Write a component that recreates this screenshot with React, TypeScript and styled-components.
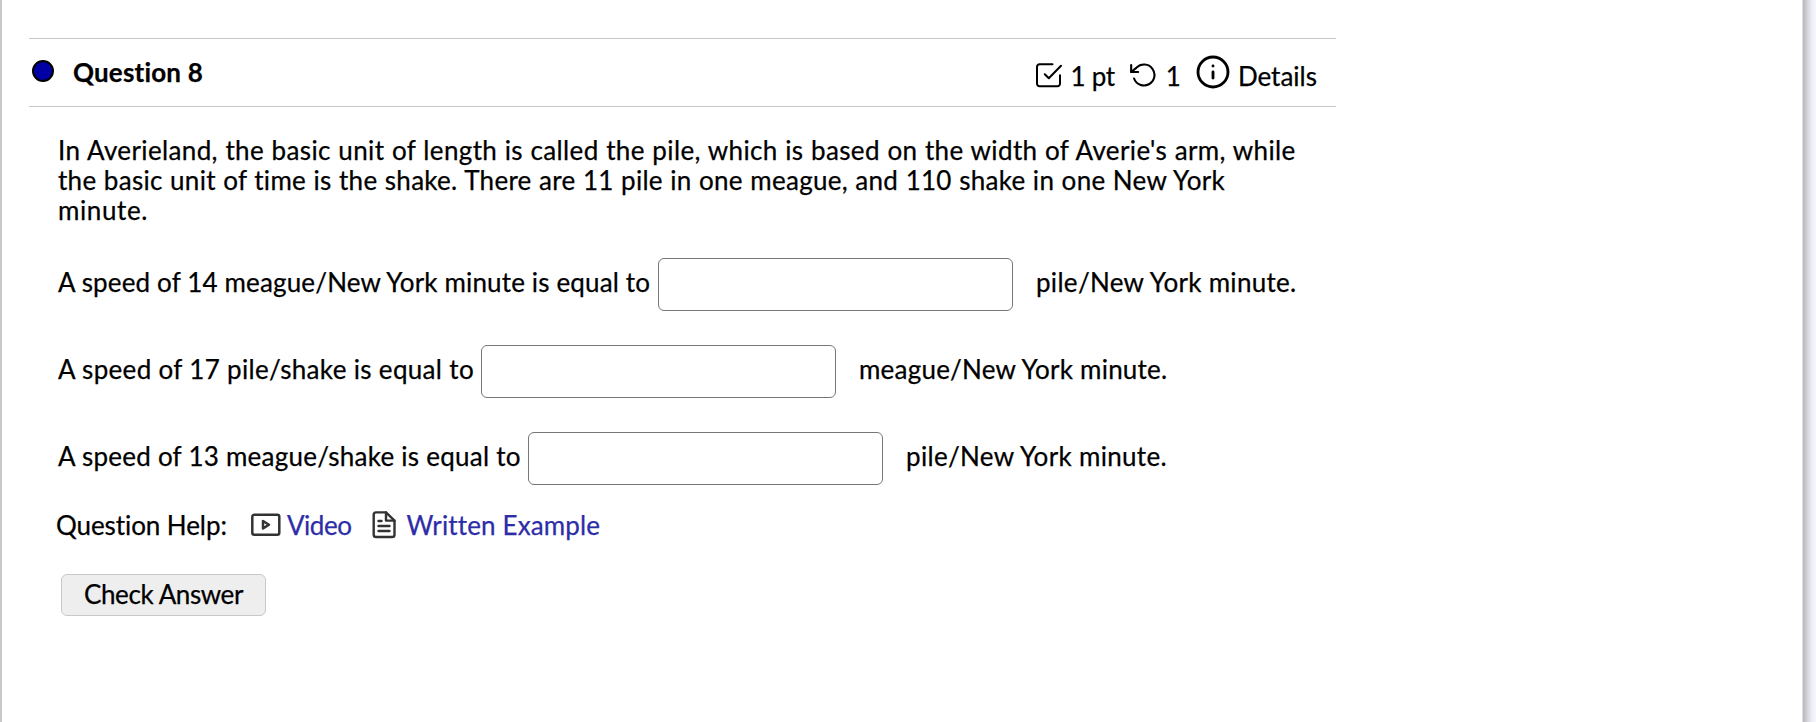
import React from 'react';
import styled, { createGlobalStyle } from 'styled-components';

const GlobalStyle = createGlobalStyle`
  * { box-sizing: border-box; }
  body {
    margin: 0;
    background: #f6f6ff;
    color: #000;
    font: 400 26px/30px Lato, 'Trebuchet MS', sans-serif;
    font-variant-ligatures: none;
    -webkit-text-stroke: 0.25px currentColor;
    overflow: hidden;
  }
`;

const Page = styled.main`
  width: 1803px;
  height: 762px;
  margin-top: -20px;
  padding: 58px 0 0 27px;
  background: #fff;
  border-left: 2px solid #c8c8cb;
  border-right: 1px solid #dedee2;
  box-shadow: 4px 0 8px 0 rgba(0, 0, 0, 0.3);
`;

const Header = styled.header`
  display: flex;
  justify-content: space-between;
  width: 1307px;
  height: 69px;
  padding: 0 19px 0 3px;
  border-top: 1px solid #c8c8c8;
  border-bottom: 1px solid #c8c8c8;
`;

const TitleGroup = styled.div`
  display: flex;
  align-items: flex-start;
  padding-top: 18px;
`;

const StatusDot = styled.span`
  width: 22px;
  height: 22px;
  margin: 3px 19px 0 0;
  border: 2px solid #000;
  border-radius: 50%;
  background: #0000a4;
`;

const Text = styled.span<{ $track?: number; $words?: number }>`
  display: block;
  white-space: pre;
  letter-spacing: ${({ $track = 0 }) => $track}px;
  word-spacing: ${({ $words = 0 }) => $words}px;
`;

const Title = styled.h1`
  margin: 0;
  font-size: 26px;
  font-weight: 700;
  line-height: 30px;
  letter-spacing: 0.18px;
`;

const Meta = styled.div`
  display: flex;
  align-items: flex-start;
  padding-top: 22px;
`;

const Glyph = styled.svg<{ $lift?: number; $gap?: number; $before?: number; $color?: string }>`
  display: block;
  flex: none;
  margin: ${({ $lift = 0, $gap = 0, $before = 0 }) => `${-$lift}px ${$gap}px 0 ${$before}px`};
  fill: none;
  stroke: ${({ $color = '#000' }) => $color};
  stroke-linecap: round;
  stroke-linejoin: round;
`;

const Body = styled.section`
  padding: 28px 0 0 29px;
`;

const Prompt = styled.p`
  margin: 0 0 33px;
`;

const AnswerList = styled.div`
  display: grid;
  gap: 34px;
`;

const AnswerRow = styled.label`
  display: flex;
  height: 53px;
  padding-top: 9px;
`;

const Lead = styled(Text)<{ $width: number }>`
  width: ${({ $width }) => $width}px;
`;

const Answer = styled.input`
  width: 355px;
  height: 53px;
  margin: -9px 23px 0 0;
  padding: 0 12px;
  border: 1px solid #767676;
  border-radius: 6px;
  background: #fff;
  font: inherit;
`;

const Help = styled.div`
  display: flex;
  height: 30px;
  margin: 25px 0 34px -2px;
`;

const HelpLabel = styled(Text)`
  width: 195px;
`;

const HelpLink = styled.a<{ $track: number }>`
  color: #2d2da8;
  text-decoration: none;
  letter-spacing: ${({ $track }) => $track}px;
`;

const CheckButton = styled.button`
  width: 205px;
  height: 42px;
  margin-left: 3px;
  padding: 0 0 2px;
  border: 1px solid #c8c8c8;
  border-radius: 6px;
  background: #eee;
  color: #000;
  font: inherit;
  letter-spacing: -0.4px;
`;

const PROMPT_LINES = [
  { text: "In Averieland, the basic unit of length is called the pile, which is based on the width of Averie's arm, while", track: 0.37, words: 0.5 },
  { text: 'the basic unit of time is the shake. There are 11 pile in one meague, and 110 shake in one New York', track: 0.28, words: 0.5 },
  { text: 'minute.', track: 0.6, words: 0 },
];

const QUESTIONS = [
  { lead: 'A speed of 14 meague/New York minute is equal to', leadWidth: 600, leadTrack: 0.15, unit: 'pile/New York minute.', unitTrack: 0.3 },
  { lead: 'A speed of 17 pile/shake is equal to', leadWidth: 423, leadTrack: 0.33, unit: 'meague/New York minute.', unitTrack: 0.22 },
  { lead: 'A speed of 13 meague/shake is equal to', leadWidth: 470, leadTrack: 0.25, unit: 'pile/New York minute.', unitTrack: 0.32 },
];

export default function App() {
  return (
    <>
      <GlobalStyle />
      <Page>
        <Header>
          <TitleGroup>
            <StatusDot />
            <Title>Question 8</Title>
          </TitleGroup>
          <Meta>
            <Glyph width="28" height="28" viewBox="0 0 28 28" strokeWidth="2" $gap={9}>
              <path d="M18.5 3.2H5.5a2.5 2.5 0 0 0-2.5 2.5v17a2.5 2.5 0 0 0 2.5 2.5h18a2.5 2.5 0 0 0 2.5-2.5v-8.5" />
              <path d="M10.8 13.2l4 4.1L27 4.8" />
            </Glyph>
            <Text $track={-0.3}>1 pt</Text>
            <Glyph width="28" height="28" viewBox="0 0 24 24" strokeWidth="1.8" $before={15} $gap={8}>
              <path d="M1 3.4v6h6" />
              <path d="M3.51 15a9 9 0 1 0 2.13-9.36L1 9.4" />
            </Glyph>
            <Text>1</Text>
            <Glyph width="36" height="36" viewBox="0 0 24 24" strokeWidth="1.9" $lift={7} $before={14} $gap={7}>
              <circle cx="12" cy="12" r="10" />
              <path d="M12 16v-4M12 8h.01" />
            </Glyph>
            <Text>Details</Text>
          </Meta>
        </Header>
        <Body>
          <Prompt>
            {PROMPT_LINES.map((line) => (
              <Text key={line.text} $track={line.track} $words={line.words}>{line.text}</Text>
            ))}
          </Prompt>
          <AnswerList>
            {QUESTIONS.map((q) => (
              <AnswerRow key={q.lead}>
                <Lead $width={q.leadWidth} $track={q.leadTrack}>{q.lead}</Lead>
                <Answer type="text" />
                <Text $track={q.unitTrack}>{q.unit}</Text>
              </AnswerRow>
            ))}
          </AnswerList>
          <Help>
            <HelpLabel $track={-0.08}>Question Help:</HelpLabel>
            <Glyph width="30" height="24" viewBox="0 0 30 24" strokeWidth="2.5" $color="#333" $lift={-3} $gap={6}>
              <rect x="1.3" y="1.7" width="27" height="20" rx="2" />
              <path d="M12 8v7.4l6-3.7z" />
            </Glyph>
            <HelpLink $track={-0.5}>Video</HelpLink>
            <Glyph width="24" height="28" viewBox="0 0 24 28" strokeWidth="2.4" $color="#333" $lift={-1} $before={21} $gap={10}>
              <path d="M14 1.4H4a2.3 2.3 0 0 0-2.3 2.3v20A2.3 2.3 0 0 0 4 26h16.2a2.3 2.3 0 0 0 2.3-2.3V9.6z" />
              <path d="M14 1.4v8.2h8.5M6.5 10h3M6.5 15h11M6.5 20h11" />
            </Glyph>
            <HelpLink $track={0.14}>Written Example</HelpLink>
          </Help>
          <CheckButton type="button">Check Answer</CheckButton>
        </Body>
      </Page>
    </>
  );
}
